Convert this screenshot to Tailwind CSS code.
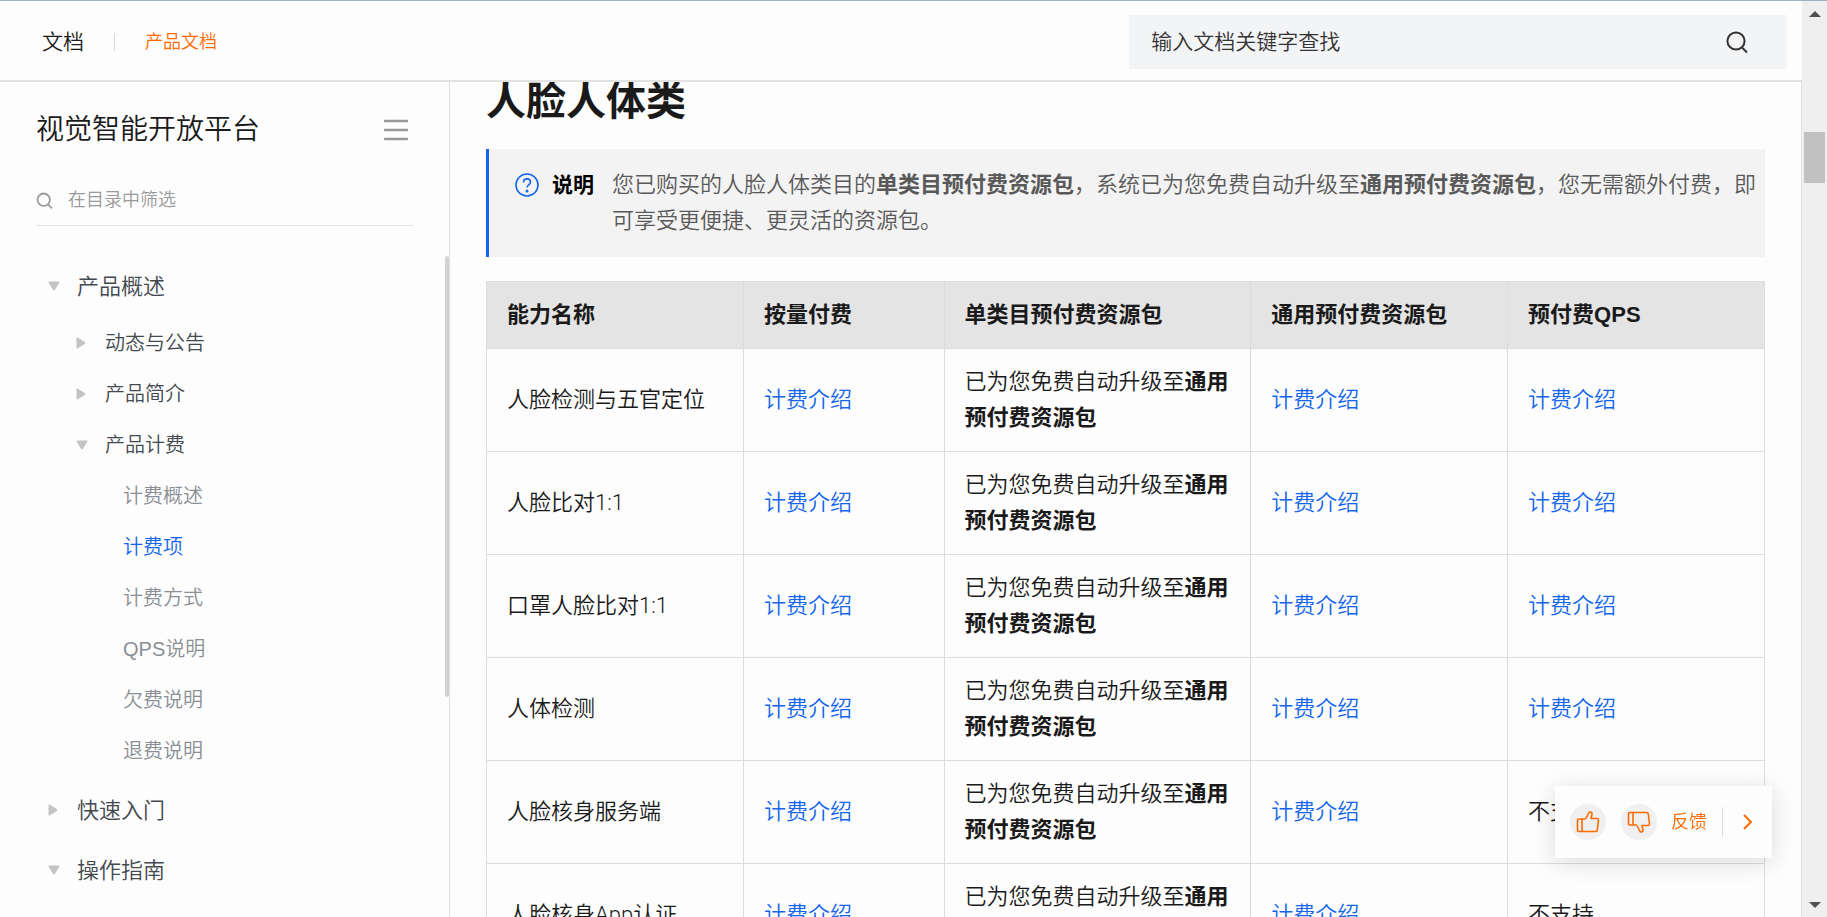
<!DOCTYPE html>
<html lang="zh-CN">
<head>
<meta charset="utf-8">
<title>计费项 - 视觉智能开放平台</title>
<script src="https://cdn.jsdelivr.net/npm/@tailwindcss/browser@4"></script>
</head>
<body class="flex h-screen overflow-hidden bg-[#fdfdfd] font-['Liberation_Sans','Noto_Sans_CJK_SC',sans-serif] font-[350] text-[#1a1a1a]">
<div class="flex min-w-0 flex-1 flex-col border-t border-[#a3afca]">
  <header class="z-10 flex h-[81px] shrink-0 items-center justify-between border-b-2 border-[#e2e2e2] bg-[#fdfdfd] pt-0.5 pr-[15px] pl-[42px]">
    <nav class="flex items-center">
      <a href="#" class="text-[21px] leading-8">文档</a>
      <span class="mx-[30px] h-[18px] w-px bg-[#d8d8d8]"></span>
      <a href="#" class="text-lg leading-8 text-[#ff6a00]">产品文档</a>
    </nav>
    <form class="flex h-[54px] w-[37.7%] items-center bg-[#f3f4f6] pr-[38px] pl-[22px]">
      <input type="text" aria-label="搜索文档" placeholder="输入文档关键字查找" class="min-w-0 flex-1 bg-transparent text-[21px] leading-8 outline-none placeholder:text-[#333]">
      <button type="button" aria-label="搜索"><svg class="size-6" viewBox="0 0 24 24" fill="none" stroke="#333" stroke-width="2"><circle cx="11" cy="11" r="8.6"/><path d="M17 17.5l5 5"/></svg></button>
    </form>
  </header>
  <div class="flex min-h-0 flex-1">
    <aside class="flex w-[450px] shrink-0 border-r border-[#dedede]">
      <div class="flex-1 pl-9">
        <div class="flex items-center justify-between pt-[27px] pr-9">
          <h2 class="text-[28px] leading-[42px]">视觉智能开放平台</h2>
          <button type="button" aria-label="收起目录"><svg class="h-6 w-[26px]" viewBox="0 0 26 24" stroke="#999" stroke-width="2.4" stroke-linecap="round"><path d="M2 3h22M2 12h22M2 21h22"/></svg></button>
        </div>
        <label class="mt-6 mr-8 flex h-[51px] items-center gap-[15px] border-b border-[#e0e0e0]">
          <svg class="size-[17px]" viewBox="0 0 17 17" fill="none" stroke="#999" stroke-width="1.8"><circle cx="7.7" cy="7.7" r="6.2"/><path d="M12 12.3l4 4"/></svg>
          <input type="text" aria-label="在目录中筛选" placeholder="在目录中筛选" class="min-w-0 flex-1 bg-transparent text-lg leading-7 outline-none placeholder:text-[#999]">
        </label>
        <ul class="pt-[29px] pl-3 text-[22px] text-[#43494f]">
          <li>
            <a href="#" class="flex h-[62px] items-center gap-[17px]"><svg class="size-3" viewBox="0 0 12 12" fill="#c4c4c4"><path d="M1 1.5h10q1 .3.5 1L7 9.8q-1 1-2 0L.5 2.5q-.5-.7.5-1z"/></svg>产品概述</a>
            <ul class="pl-7 text-xl">
              <li><a href="#" class="flex h-[51px] items-center gap-[17px]"><svg class="size-3" viewBox="0 0 12 12" fill="#c4c4c4"><path d="M.5 1v10q.3 1 1 .5L8.8 7q1-1 0-2L1.5.5Q.8 0 .5 1z"/></svg>动态与公告</a></li>
              <li><a href="#" class="flex h-[51px] items-center gap-[17px]"><svg class="size-3" viewBox="0 0 12 12" fill="#c4c4c4"><path d="M.5 1v10q.3 1 1 .5L8.8 7q1-1 0-2L1.5.5Q.8 0 .5 1z"/></svg>产品简介</a></li>
              <li>
                <a href="#" class="flex h-[51px] items-center gap-[17px]"><svg class="size-3" viewBox="0 0 12 12" fill="#c4c4c4"><path d="M1 1.5h10q1 .3.5 1L7 9.8q-1 1-2 0L.5 2.5q-.5-.7.5-1z"/></svg>产品计费</a>
                <ul class="pl-[47px] text-[#8a8f95]">
                  <li><a href="#" class="flex h-[51px] items-center">计费概述</a></li>
                  <li><a href="#" class="flex h-[51px] items-center text-[#1366ec]">计费项</a></li>
                  <li><a href="#" class="flex h-[51px] items-center">计费方式</a></li>
                  <li><a href="#" class="flex h-[51px] items-center">QPS说明</a></li>
                  <li><a href="#" class="flex h-[51px] items-center">欠费说明</a></li>
                  <li><a href="#" class="flex h-[51px] items-center">退费说明</a></li>
                </ul>
              </li>
            </ul>
          </li>
          <li class="pt-1"><a href="#" class="flex h-[60px] items-center gap-[17px]"><svg class="size-3" viewBox="0 0 12 12" fill="#c4c4c4"><path d="M.5 1v10q.3 1 1 .5L8.8 7q1-1 0-2L1.5.5Q.8 0 .5 1z"/></svg>快速入门</a></li>
          <li><a href="#" class="flex h-[60px] items-center gap-[17px]"><svg class="size-3" viewBox="0 0 12 12" fill="#c4c4c4"><path d="M1 1.5h10q1 .3.5 1L7 9.8q-1 1-2 0L.5 2.5q-.5-.7.5-1z"/></svg>操作指南</a></li>
        </ul>
      </div>
      <div class="mt-[174px] h-[441px] w-1 shrink-0 rounded bg-[#d3d3d3]"></div>
    </aside>
    <main class="min-w-0 flex-1 border-r border-[#e2e2e2] pr-9 pl-9">
      <h1 class="-mt-2 text-[40px] leading-[54px] font-bold">人脸人体类</h1>
      <section class="mt-[21px] flex border-l-[3px] border-[#1366ec] bg-[#f3f3f3] py-[18px] pr-2 pl-[26px] text-[22px] leading-9">
        <svg class="mt-1.5 size-6 shrink-0" viewBox="0 0 24 24" fill="none" stroke="#1366ec" stroke-width="1.6"><circle cx="12" cy="12" r="11"/><path d="M8.500 9.500c0-2.200 1.500-3.600 3.500-3.600s3.500 1.300 3.500 3.200c0 2.700-3.500 2.700-3.500 5.400"/><circle cx="12" cy="18" r=".7" fill="#1366ec"/></svg>
        <strong class="mr-[18px] ml-[13px] shrink-0 text-[21px] font-bold text-black">说明</strong>
        <p class="text-[#595959]">您已购买的人脸人体类目的<strong class="font-bold">单类目预付费资源包</strong>，系统已为您免费自动升级至<strong class="font-bold">通用预付费资源包</strong>，您无需额外付费，即可享受更便捷、更灵活的资源包。</p>
      </section>
      <table class="mt-6 w-full table-fixed border-collapse text-left text-[22px] leading-9 [&_td]:h-[103px] [&_td]:border [&_td]:border-[#dcdcdc] [&_td]:px-5 [&_td]:py-0 [&_th]:h-[67px] [&_th]:border [&_th]:border-[#dcdcdc] [&_th]:px-5 [&_th]:py-0 [&_th]:font-bold">
        <colgroup><col class="w-[20.1%]"><col class="w-[15.7%]"><col class="w-[24%]"><col class="w-[20.1%]"><col class="w-[20.1%]"></colgroup>
        <thead class="bg-[#e4e4e4]"><tr><th>能力名称</th><th>按量付费</th><th>单类目预付费资源包</th><th>通用预付费资源包</th><th>预付费QPS</th></tr></thead>
        <tbody class="font-['Roboto','Noto_Sans_CJK_SC',sans-serif]">
          <tr><td>人脸检测与五官定位</td><td><a href="#" class="text-[#1366ec]">计费介绍</a></td><td>已为您免费自动升级至<b class="font-bold">通用预付费资源包</b></td><td><a href="#" class="text-[#1366ec]">计费介绍</a></td><td><a href="#" class="text-[#1366ec]">计费介绍</a></td></tr>
          <tr><td>人脸比对1:1</td><td><a href="#" class="text-[#1366ec]">计费介绍</a></td><td>已为您免费自动升级至<b class="font-bold">通用预付费资源包</b></td><td><a href="#" class="text-[#1366ec]">计费介绍</a></td><td><a href="#" class="text-[#1366ec]">计费介绍</a></td></tr>
          <tr><td>口罩人脸比对1:1</td><td><a href="#" class="text-[#1366ec]">计费介绍</a></td><td>已为您免费自动升级至<b class="font-bold">通用预付费资源包</b></td><td><a href="#" class="text-[#1366ec]">计费介绍</a></td><td><a href="#" class="text-[#1366ec]">计费介绍</a></td></tr>
          <tr><td>人体检测</td><td><a href="#" class="text-[#1366ec]">计费介绍</a></td><td>已为您免费自动升级至<b class="font-bold">通用预付费资源包</b></td><td><a href="#" class="text-[#1366ec]">计费介绍</a></td><td><a href="#" class="text-[#1366ec]">计费介绍</a></td></tr>
          <tr><td>人脸核身服务端</td><td><a href="#" class="text-[#1366ec]">计费介绍</a></td><td>已为您免费自动升级至<b class="font-bold">通用预付费资源包</b></td><td><a href="#" class="text-[#1366ec]">计费介绍</a></td><td>不支持</td></tr>
          <tr><td>人脸核身App认证</td><td><a href="#" class="text-[#1366ec]">计费介绍</a></td><td>已为您免费自动升级至<b class="font-bold">通用预付费资源包</b></td><td><a href="#" class="text-[#1366ec]">计费介绍</a></td><td>不支持</td></tr>
        </tbody>
      </table>
    </main>
  </div>
</div>
<div class="flex w-[25px] shrink-0 flex-col items-center border-t border-[#a3afca] bg-[#efefef]">
  <svg class="mt-2.5 h-1.5 w-3 shrink-0" viewBox="0 0 12 6" fill="#505050"><path d="M0 6L6 0l6 6z"/></svg>
  <div class="mt-[115px] h-[51px] w-[21px] bg-[#c1c1c1]"></div>
  <svg class="mt-auto mb-[9px] h-1.5 w-3 shrink-0" viewBox="0 0 12 6" fill="#505050"><path d="M0 0l6 6 6-6z"/></svg>
</div>
<div class="fixed right-[55px] bottom-[59px] z-20 flex h-[72px] items-center bg-[#fdfdfd] pr-4 pl-[15px] text-lg text-[#ff6a00] shadow-[0_4px_24px_rgba(0,0,0,0.14)]">
  <button type="button" aria-label="有帮助" class="mr-[15px] flex size-9 items-center justify-center rounded-full bg-[#f0f0f0]"><svg class="size-6" viewBox="0 0 24 24" fill="none" stroke="#ff6a00" stroke-width="1.6" stroke-linejoin="round"><path d="M6 9H2.500Q1.500 9 1.500 10v10.500q0 1 1 1H6M6 9v12.500M6 9h2.500q1.200 0 1.700-1L12.500 3.500c.3-1.200 1-1.700 2-1.500 1.200.2 1.700 1 1.500 2.200l-1 4.300h6c1 0 1.600.7 1.500 1.600L21.300 20c-.1.900-.8 1.500-1.600 1.500H6"/></svg></button>
  <button type="button" aria-label="没帮助" class="mr-[14px] flex size-9 items-center justify-center rounded-full bg-[#f0f0f0]"><svg class="size-6" viewBox="0 0 24 24" fill="none" stroke="#ff6a00" stroke-width="1.6" stroke-linejoin="round"><path d="M6 15H2.500Q1.500 15 1.500 14V3.500q0-1 1-1H6M6 15V2.500M6 15h2.500q1.200 0 1.700 1l2.300 4.500c.3 1.200 1 1.700 2 1.500 1.200-.2 1.700-1 1.500-2.200l-1-4.300h6c1 0 1.600-.7 1.500-1.600L21.300 4c-.1-.9-.8-1.500-1.600-1.500H6"/></svg></button>
  <button type="button">反馈</button>
  <span class="ml-[15px] h-[30px] w-px bg-[#dedede]"></span>
  <button type="button" aria-label="收起" class="ml-[17px]"><svg class="h-4 w-4" viewBox="0 0 16 16" fill="none" stroke="#ff6a00" stroke-width="2"><path d="M4 1l7 7-7 7"/></svg></button>
</div>
</body>
</html>
